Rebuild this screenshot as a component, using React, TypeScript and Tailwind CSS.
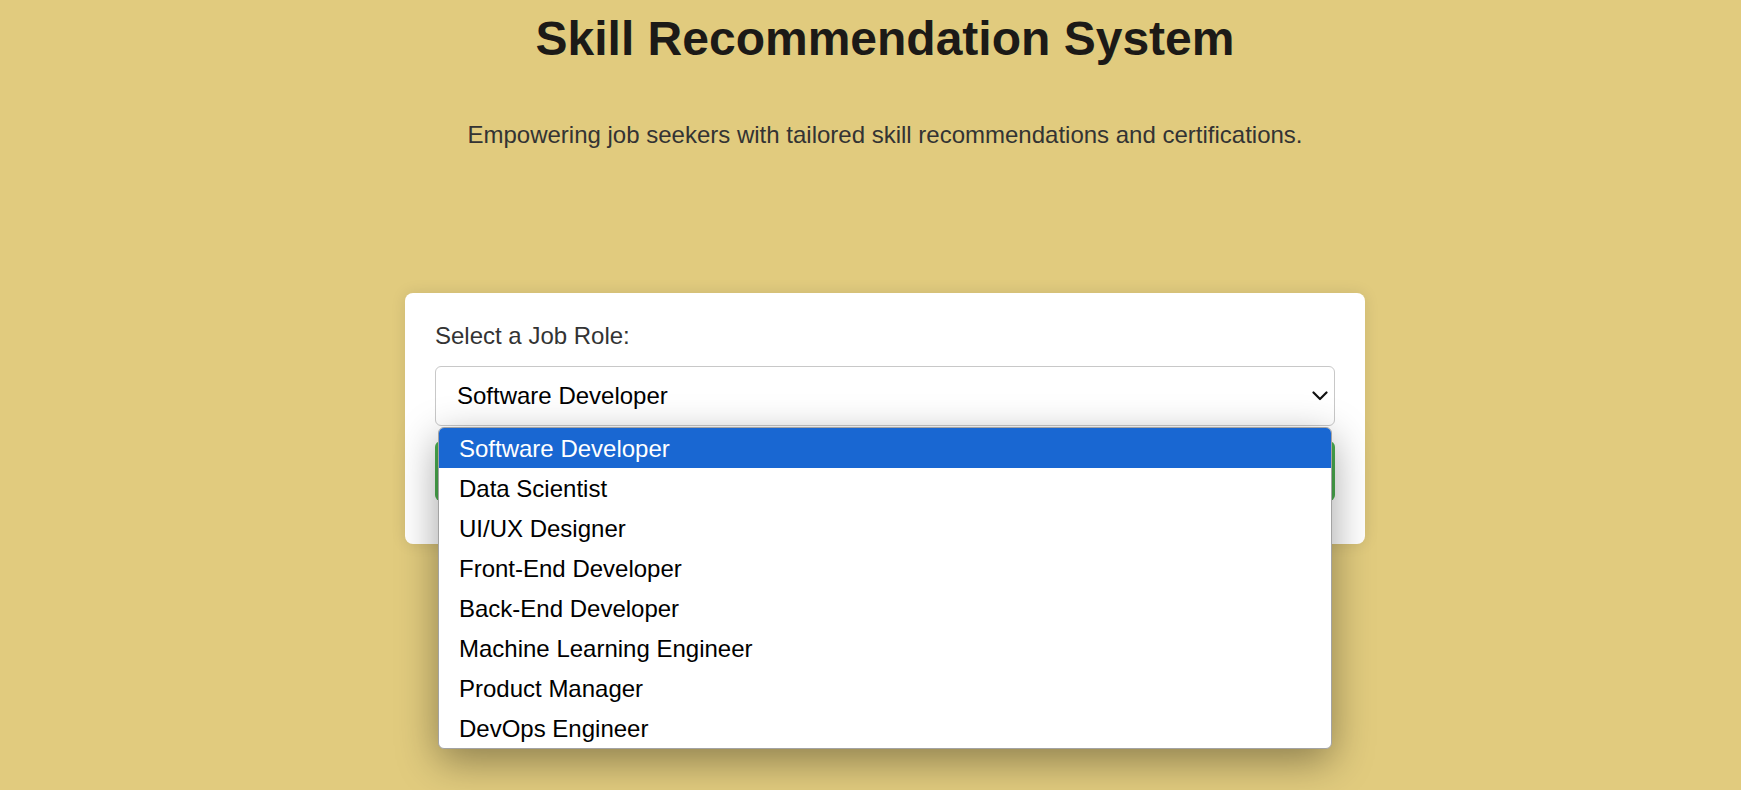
import { useState } from "react";

const roles = [
  "Software Developer",
  "Data Scientist",
  "UI/UX Designer",
  "Front-End Developer",
  "Back-End Developer",
  "Machine Learning Engineer",
  "Product Manager",
  "DevOps Engineer",
];

const App = () => {
  const [selected, setSelected] = useState(roles[0]);
  const [open, setOpen] = useState(true);

  return (
    <div className="min-h-[790px] w-full bg-[#e1cb7e] pl-[29px] text-center font-['Liberation_Sans',Arial,sans-serif]">
      <header className="pt-[11px]">
        <h1 className="text-[48px] font-bold leading-[55px] text-[#1c1a17]">
          Skill Recommendation System
        </h1>
        <p className="mt-[55px] text-[24px] leading-[28px] text-[#333]">
          Empowering job seekers with tailored skill recommendations and
          certifications.
        </p>
      </header>

      <main className="mt-[144px] flex justify-center">
        <div className="w-[960px] rounded-[8px] bg-white px-[30px] pb-[43px] pt-[29px] text-left shadow-[0_0_15px_rgba(0,0,0,0.1)]">
          <label className="mb-[16px] block text-[24px] leading-[28px] text-[#333]">
            Select a Job Role:
          </label>
          <div className="relative">
            <div
              className="flex h-[60px] cursor-pointer items-center justify-between rounded-[6px] border border-[#c8c8c8] bg-white pl-[21px] pr-[6px] text-[24px] text-black"
              onClick={() => setOpen((prev) => !prev)}
            >
              <span>{selected}</span>
              <svg width="16" height="10" viewBox="0 0 16 10" fill="none">
                <path
                  d="M1.5 1.5 L8 8 L14.5 1.5"
                  stroke="#111"
                  strokeWidth="2.2"
                  strokeLinecap="round"
                  strokeLinejoin="round"
                />
              </svg>
            </div>

            {open && (
              <ul className="absolute left-[3px] right-[3px] top-[61px] z-10 overflow-hidden rounded-[6px] border border-[#a3a3a3] bg-white text-[24px] shadow-[0_12px_40px_rgba(0,0,0,0.38)]">
                {roles.map((role) => (
                  <li
                    key={role}
                    className={`flex h-[40px] cursor-default items-center pl-[20px] pt-[1px] ${
                      role === selected ? "bg-[#1967d2] text-white" : "text-black"
                    }`}
                    onClick={() => {
                      setSelected(role);
                      setOpen(false);
                    }}
                  >
                    {role}
                  </li>
                ))}
              </ul>
            )}

            <button
              type="button"
              className="mt-[15px] h-[60px] w-full rounded-[6px] bg-[#4caf50] text-[24px] text-white"
            >
              Get Recommendations
            </button>
          </div>
        </div>
      </main>
    </div>
  );
};

export default App;
